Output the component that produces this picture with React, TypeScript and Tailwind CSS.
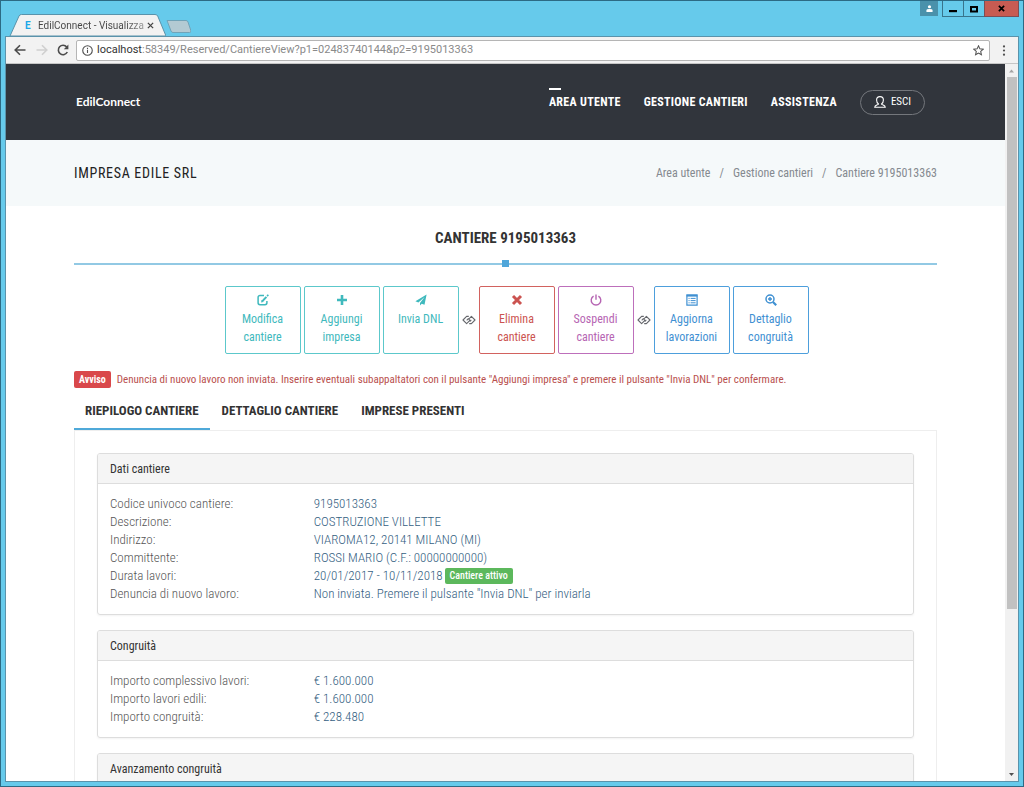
import { useState } from "react";
import type { ReactNode } from "react";
import clsx from "clsx";

const actionGroups = [
  {
    id: "cantiere",
    items: [
      { icon: "edit", lines: ["Modifica", "cantiere"], color: "border-[#5cc8cb] text-[#3fb9bd]" },
      { icon: "plus", lines: ["Aggiungi", "impresa"], color: "border-[#5cc8cb] text-[#3fb9bd]" },
      { icon: "send", lines: ["Invia DNL"], color: "border-[#5cc8cb] text-[#3fb9bd]" },
    ],
  },
  {
    id: "stato",
    items: [
      { icon: "remove", lines: ["Elimina", "cantiere"], color: "border-[#d2625f] text-[#cb5350]" },
      { icon: "off", lines: ["Sospendi", "cantiere"], color: "border-[#bd6fbb] text-[#b665b3]" },
    ],
  },
  {
    id: "dettagli",
    items: [
      { icon: "list", lines: ["Aggiorna", "lavorazioni"], color: "border-[#4d9fdc] text-[#3f90d2]" },
      { icon: "zoom", lines: ["Dettaglio", "congruità"], color: "border-[#4d9fdc] text-[#3f90d2]" },
    ],
  },
];

const tabs = ["RIEPILOGO CANTIERE", "DETTAGLIO CANTIERE", "IMPRESE PRESENTI"];

const datiCantiere: [string, string][] = [
  ["Codice univoco cantiere:", "9195013363"],
  ["Descrizione:", "COSTRUZIONE VILLETTE"],
  ["Indirizzo:", "VIAROMA12, 20141 MILANO (MI)"],
  ["Committente:", "ROSSI MARIO (C.F.: 00000000000)"],
  ["Durata lavori:", "20/01/2017 - 10/11/2018"],
  ["Denuncia di nuovo lavoro:", 'Non inviata. Premere il pulsante "Invia DNL" per inviarla'],
];

const congruita: [string, string][] = [
  ["Importo complessivo lavori:", "€ 1.600.000"],
  ["Importo lavori edili:", "€ 1.600.000"],
  ["Importo congruità:", "€ 228.480"],
];

function ActionIcon({ name }: { name: string }) {
  return (
    <svg viewBox="0 0 12 12" className="h-3 w-3" fill="none" stroke="currentColor" strokeWidth="1.5">
      {name === "edit" && (
        <>
          <path d="M7 1.500H3A1.900 1.900 0 0 0 1.100 3.400v5.400A1.900 1.900 0 0 0 3 10.700h5a1.900 1.900 0 0 0 1.900-1.900V7" />
          <path d="M5.200 7.400L9.400 2.800" strokeWidth="2" />
          <path d="M4.100 8.600l.4-2.500 1.900 1.800z" fill="currentColor" stroke="none" />
          <path d="M10.100.9l1.200 1.100" strokeWidth="1.800" />
        </>
      )}
      {name === "plus" && <path d="M6 1v10M1 6h10" strokeWidth="2.6" />}
      {name === "send" && (
        <path d="M11.6.4L.4 7.2l3 1.2L9.6 3 5 9v2.6l1.7-1.9 2.8 1.1z" fill="currentColor" stroke="none" />
      )}
      {name === "remove" && <path d="M2 2l8 8M10 2L2 10" strokeWidth="3" />}
      {name === "off" && (
        <>
          <path d="M3.6 2.1a4.8 4.8 0 1 0 4.8 0" strokeWidth="1.4" />
          <path d="M6 .4v5.4" strokeWidth="1.4" />
        </>
      )}
      {name === "list" && (
        <>
          <path d="M.9.9h10.2v10.2H.9z" strokeWidth="1.2" />
          <path d="M.6 1.8h10.8" strokeWidth="1.6" />
          <path d="M2.5 4.4h1.1M2.5 6.6h1.1M2.5 8.8h1.1M4.6 4.4h5M4.6 6.6h5M4.6 8.8h5" strokeWidth="1" />
        </>
      )}
      {name === "zoom" && (
        <>
          <circle cx="5" cy="5" r="4" />
          <path d="M8 8l3.2 3.2" strokeWidth="2.2" />
          <path d="M5 3v4M3 5h4" strokeWidth="1.4" />
        </>
      )}
    </svg>
  );
}

function LinkIcon() {
  return (
    <svg viewBox="0 0 14 10" className="h-[10px] w-[14px] shrink-0" fill="none" stroke="#66686d" strokeWidth="1.1" strokeLinejoin="round">
      <path d="M6.800 1.400H4.600L1 5l3.600 3.600L7.900 5.300 6.300 3.700 4.700 5.300" />
      <path d="M7.200 8.600h2.200L13 5 9.400 1.400 6.900 3.900M7.700 6.500l1.600-1.600" />
    </svg>
  );
}

function WindowTitleBar() {
  return (
    <div className="flex h-[35px] shrink-0 items-end justify-between">
      <div className="flex items-end">
        <div className="relative h-[22px] w-[161px]">
          <svg viewBox="0 0 161 22" className="absolute inset-0 h-full w-full">
            <path d="M5 22L14 2Q14.700.5 16.500.5H150Q152 .5 152.700 2L161 22z" fill="#f2f2f2" stroke="#5a93ab" />
          </svg>
          <div className="relative flex h-full items-center pl-5 font-['Roboto',sans-serif]">
            <span className="w-[13px] text-[10px] font-bold text-[#1ba7e8]">E</span>
            <span className="w-[109px] bg-linear-to-r from-[#444] from-80% to-[#aaa] bg-clip-text text-[10px] whitespace-nowrap text-transparent">
              EdilConnect - Visualizza
            </span>
            <button aria-label="Chiudi scheda">
              <svg viewBox="0 0 8 8" className="h-[7px] w-[7px]" stroke="#444" strokeWidth="1.5">
                <path d="M1 1l6 6M7 1L1 7" />
              </svg>
            </button>
          </div>
        </div>
        <button aria-label="Nuova scheda" className="mb-[3px]">
          <svg viewBox="0 0 25 13" className="h-[13px] w-[25px]">
            <path d="M1 .5h19q1.500 0 2 1.500l3 9q0 1.500-1.500 1.500H7q-1.500 0-2-1.500z" fill="#b3cad3" stroke="#6fa3b8" />
          </svg>
        </button>
      </div>
      <div className="flex self-start">
        <button aria-label="Profilo" className="mr-1 flex h-[15px] w-[18px] items-center justify-center bg-[#4a91ab]">
          <svg viewBox="0 0 8 8" className="h-[7px] w-[7px]" fill="#fff">
            <circle cx="4" cy="2" r="1.800" />
            <path d="M.5 8V6.300Q.5 4.600 4 4.600t3.500 1.700V8z" />
          </svg>
        </button>
        <button aria-label="Riduci" className="flex h-4 w-[22px] items-center justify-center border border-t-0 border-[#38748c]">
          <svg viewBox="0 0 8 8" className="h-2 w-2">
            <path d="M0 5h8v2.200H0z" />
          </svg>
        </button>
        <button aria-label="Ingrandisci" className="flex h-4 w-5 items-center justify-center border-b border-[#38748c]">
          <svg viewBox="0 0 8 8" className="h-2 w-2" fill="none" stroke="#000" strokeWidth="2">
            <path d="M1 2h6v4.500H1z" />
          </svg>
        </button>
        <button aria-label="Chiudi" className="flex h-4 w-[35px] items-center justify-center border border-t-0 border-[#7d4d54] bg-[#c75b52]">
          <svg viewBox="0 0 8 8" className="h-[7px] w-[7px]" stroke="#000" strokeWidth="2">
            <path d="M1 1l6 6M7 1L1 7" />
          </svg>
        </button>
      </div>
    </div>
  );
}

function AddressBar() {
  return (
    <div className="flex h-[27px] shrink-0 items-center border-b border-[#c6c6c6] bg-[#f2f2f2] pr-3 pl-2">
      <button aria-label="Indietro" className="mr-[10px]">
        <svg viewBox="0 0 12 12" className="h-3 w-3" fill="none" stroke="#4c4c4c" strokeWidth="1.600">
          <path d="M11.500 6H1.500M6 1.200L1.200 6 6 10.800" />
        </svg>
      </button>
      <button aria-label="Avanti" className="mr-[9px]">
        <svg viewBox="0 0 12 12" className="h-3 w-3" fill="none" stroke="#d0d0d0" strokeWidth="1.600">
          <path d="M.5 6h10M6 1.200L10.800 6 6 10.800" />
        </svg>
      </button>
      <button aria-label="Ricarica" className="mr-[7px]">
        <svg viewBox="0 0 12 12" className="h-3 w-3" fill="none" stroke="#4c4c4c" strokeWidth="1.600">
          <path d="M10.300 8a4.700 4.700 0 1 1-.6-5" />
          <path d="M11.400.6v4.600H6.800z" fill="#4c4c4c" stroke="none" />
        </svg>
      </button>
      <div className="flex h-[21px] flex-1 items-center rounded-[2px] border border-[#b5b5b5] bg-white px-[5px]">
        <svg viewBox="0 0 12 12" className="mr-1 h-[11px] w-[11px]" fill="none" stroke="#505050" strokeWidth="1.200">
          <circle cx="6" cy="6" r="5.200" />
          <path d="M6 5.300v3.500M6 3v1.300" />
        </svg>
        <span className="flex-1 font-['Roboto',sans-serif] text-[11px] whitespace-nowrap text-[#8a8a8a]">
          <span className="text-[#333]">localhost</span>:58349/Reserved/CantiereView?p1=02483740144&amp;p2=9195013363
        </span>
        <button aria-label="Aggiungi ai preferiti">
          <svg viewBox="0 0 12 12" className="h-[11px] w-[11px]" fill="none" stroke="#505050" strokeWidth="1.100">
            <path d="M6 .9l1.500 3.300 3.700.4-2.800 2.400.8 3.700L6 8.800l-3.200 1.900.8-3.700L.8 4.600l3.700-.4z" />
          </svg>
        </button>
      </div>
      <button aria-label="Menu" className="ml-3">
        <svg viewBox="0 0 4 12" className="h-[11px] w-1" fill="#505050">
          <circle cx="2" cy="1.500" r="1.200" />
          <circle cx="2" cy="6" r="1.200" />
          <circle cx="2" cy="10.500" r="1.200" />
        </svg>
      </button>
    </div>
  );
}

function ScrollBar() {
  return (
    <div className="flex w-[13px] shrink-0 flex-col items-center bg-[#f1f1f1]">
      <svg viewBox="0 0 13 13" className="h-[13px] w-[13px] shrink-0" fill="#a3a3a3">
        <path d="M4 8.500h5L6.500 5.500z" />
      </svg>
      <div className="w-[10px] flex-[532] bg-[#c1c1c1]" />
      <div className="flex-[159]" />
      <svg viewBox="0 0 13 13" className="h-[13px] w-[13px] shrink-0" fill="#505050">
        <path d="M4 5h5L6.500 8z" />
      </svg>
    </div>
  );
}

function SiteHeader() {
  return (
    <header className="flex h-[76px] items-center justify-between bg-[#31353c] pr-20 pl-[70px] text-white">
      <a href="#" className="font-['Lato',sans-serif] text-[12px] font-bold">
        EdilConnect
      </a>
      <nav className="flex items-center gap-[23px] text-[12px] font-bold tracking-wide">
        <a href="#" className="relative">
          <span className="absolute -top-[5px] left-0 h-[2px] w-3 bg-white" />
          AREA UTENTE
        </a>
        <a href="#">GESTIONE CANTIERI</a>
        <a href="#">ASSISTENZA</a>
        <button className="flex h-[25px] w-[65px] items-center justify-center gap-[5px] rounded-full border border-[#74777c] text-[11px] font-normal tracking-normal">
          <svg viewBox="0 0 12 12" className="h-3 w-3" fill="none" stroke="#fff" strokeWidth="1.100">
            <path d="M4.500 8C3 7 2.600 5.500 2.600 4a3.400 3.400 0 0 1 6.800 0C9.400 5.500 9 7 7.500 8c0 1 3.800.8 3.800 3.300H.7C.7 8.800 4.500 9 4.500 8z" />
          </svg>
          ESCI
        </button>
      </nav>
    </header>
  );
}

function Panel({ title, children }: { title: string; children?: ReactNode }) {
  return (
    <section className="mb-[15px] overflow-hidden rounded-[3px] border border-[#dddddd] shadow-xs">
      <h2 className="h-[30px] border-b border-[#dddddd] bg-[#f5f5f5] px-3 text-[12px] leading-[30px] text-[#333]">{title}</h2>
      <div className="py-[11px]">{children}</div>
    </section>
  );
}

function DataList({ rows }: { rows: [string, string][] }) {
  return (
    <dl className="text-[13px] leading-[18px] font-light">
      {rows.map(([label, value]) => (
        <div key={label} className="grid grid-cols-4">
          <dt className="pl-3 text-[#555]">{label}</dt>
          <dd className="col-span-3 flex items-center pl-3 text-[#34607f]">
            {value}
            {label === "Durata lavori:" && (
              <span className="ml-[2px] rounded-[2px] bg-[#5cb85c] px-[5px] text-[10px] leading-4 font-medium text-white">
                Cantiere attivo
              </span>
            )}
          </dd>
        </div>
      ))}
    </dl>
  );
}

export default function App() {
  const [activeTab, setActiveTab] = useState(tabs[0]);

  return (
    <div className="flex h-screen flex-col border border-[#2c6a84] bg-[#66caeb] px-1 pb-1 font-['Roboto_Condensed','Liberation_Sans_Narrow',sans-serif]">
      <WindowTitleBar />
      <div className="flex min-h-0 flex-1 flex-col border border-[#5a93ab]">
        <AddressBar />
        <div className="flex min-h-0 flex-1">
          <div className="min-w-0 flex-1 overflow-hidden bg-white">
            <SiteHeader />

            <div className="flex h-[66px] items-center justify-between bg-[#f5f9fa] px-[68px]">
              <h1 className="text-[14px] tracking-wider text-[#222]">IMPRESA EDILE SRL</h1>
              <div className="flex gap-[9px] text-[12px] text-[#858a90]">
                <a href="#">Area utente</a>
                <span>/</span>
                <a href="#">Gestione cantieri</a>
                <span>/</span>
                <span>Cantiere 9195013363</span>
              </div>
            </div>

            <main className="px-[68px] pt-[22px]">
              <h2 className="text-center text-[15px] leading-5 font-bold text-[#333]">CANTIERE 9195013363</h2>
              <div className="mt-3 flex items-center">
                <div className="h-[2px] flex-1 bg-[#92c9e4]" />
                <div className="h-[7px] w-[7px] bg-[#4fa6da]" />
                <div className="h-[2px] flex-1 bg-[#92c9e4]" />
              </div>

              <div className="mt-[19px] flex items-center justify-center gap-[3px] pl-[22px]">
                {actionGroups.map((group, index) => (
                  <div key={group.id} className="flex items-center gap-[3px]">
                    {index > 0 && <LinkIcon />}
                    {group.items.map((item) => (
                      <button
                        key={item.icon}
                        className={clsx(
                          "flex h-[68px] w-[76px] flex-col items-center rounded-[2px] border pt-[7px] text-[12px] leading-[18px]",
                          item.color
                        )}
                      >
                        <ActionIcon name={item.icon} />
                        <span className="mt-1">
                          {item.lines.map((line) => (
                            <span key={line} className="block">
                              {line}
                            </span>
                          ))}
                        </span>
                      </button>
                    ))}
                  </div>
                ))}
              </div>

              <div className="mt-[17px] flex items-center gap-[6px] leading-[17px]">
                <span className="rounded-[2px] bg-[#d9484b] px-[5px] text-[10px] font-bold text-white">Avviso</span>
                <p className="text-[11px] text-[#b9504e]">
                  Denuncia di nuovo lavoro non inviata. Inserire eventuali subappaltatori con il pulsante "Aggiungi impresa" e
                  premere il pulsante "Invia DNL" per confermare.
                </p>
              </div>

              <div role="tablist" className="mt-[5px] flex gap-px">
                {tabs.map((tab) => (
                  <button
                    key={tab}
                    role="tab"
                    aria-selected={tab === activeTab}
                    onClick={() => setActiveTab(tab)}
                    className={clsx(
                      "h-[37px] border-b-2 px-[11px] text-[13px] font-bold text-[#333]",
                      tab === activeTab ? "border-[#4fa9d9]" : "border-transparent"
                    )}
                  >
                    {tab}
                  </button>
                ))}
              </div>

              <div className="border border-[#eeeeee] px-[22px] pt-[22px]">
                <Panel title="Dati cantiere">
                  <DataList rows={datiCantiere} />
                </Panel>
                <Panel title="Congruità">
                  <DataList rows={congruita} />
                </Panel>
                <Panel title="Avanzamento congruità" />
              </div>
            </main>
          </div>
          <ScrollBar />
        </div>
      </div>
    </div>
  );
}
